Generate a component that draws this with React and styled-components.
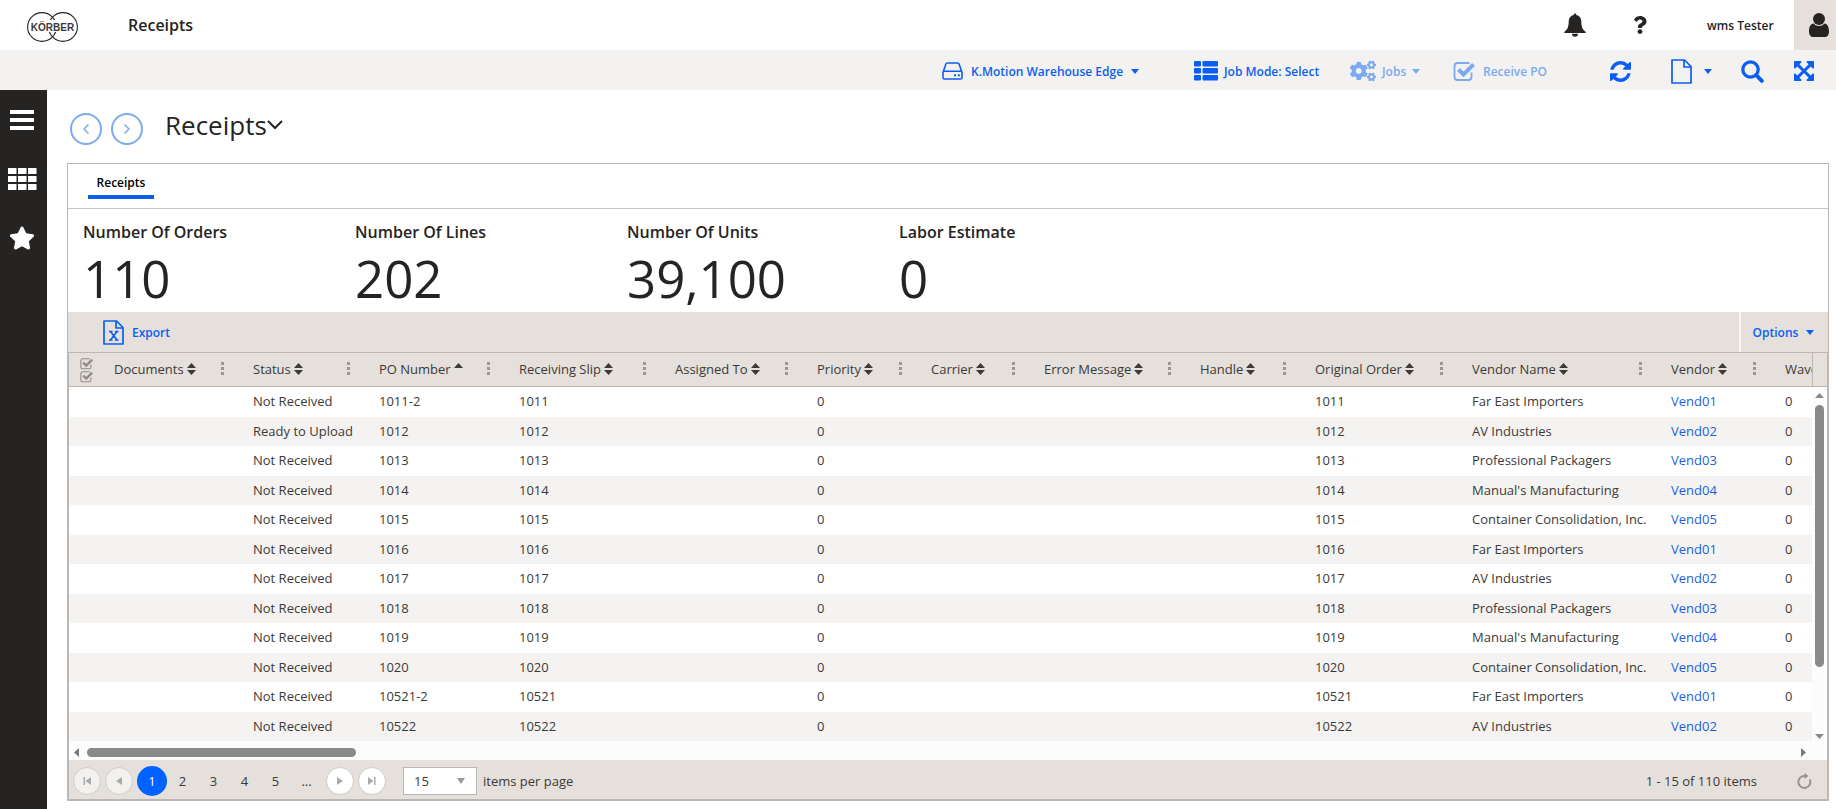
import React, { useState } from 'react';
import styled, { createGlobalStyle } from 'styled-components';
import { FaStar, FaQuestion, FaCogs } from 'react-icons/fa';

const GlobalStyle = createGlobalStyle`
  * {
    box-sizing: border-box;
  }

  body {
    margin: 0;
    background: #fff;
    color: #252423;
    font-family: 'Open Sans', 'Noto Sans', sans-serif;
    font-size: 13px;
  }

  button,
  select {
    font: inherit;
    color: inherit;
  }

  button {
    display: inline-flex;
    align-items: center;
    padding: 0;
    border: 0;
    background: none;
    cursor: pointer;
  }

  svg {
    display: block;
    flex: none;
  }
`;

const Page = styled.div`
  display: flex;
  flex-direction: column;
  min-height: 100vh;
`;

const TopBar = styled.header`
  display: flex;
  align-items: center;
  height: 50px;
  padding-left: 26px;
`;

const AppName = styled.h1`
  flex: 1;
  margin: 0 0 0 49px;
  font-size: 16px;
  font-weight: 600;
`;

const UserTools = styled.div`
  display: flex;
  align-items: center;
  align-self: stretch;
`;

const HelpButton = styled.button`
  margin: 0 58px 0 45px;
`;

const UserName = styled.span`
  width: 87px;
  font-size: 12px;
  font-weight: 600;
  white-space: nowrap;
`;

const Avatar = styled.button`
  align-self: stretch;
  width: 42px;
  padding-left: 15px !important;
  background: #e5e0db !important;
`;

const ActionBar = styled.div`
  display: grid;
  grid-template-columns: 252px 156px 103px 157px 61px 70px 53px 20px;
  justify-content: end;
  align-items: center;
  height: 40px;
  padding: 2px 22px 0 0;
  background: #f3f2f0;
`;

const Action = styled.button`
  gap: ${(props) => props.$gap || 8}px;
  color: #0a5ff2;
  font-size: 12px;
  font-weight: 600;
  white-space: nowrap;

  &:disabled {
    color: #7baaf0;
    cursor: default;
  }
`;

const Body = styled.div`
  display: flex;
  flex: 1;
`;

const Sidebar = styled.nav`
  display: flex;
  flex-direction: column;
  align-items: center;
  gap: 35px;
  width: 47px;
  padding: 18px 3px 0 0;
  background: #252423;
`;

const SideButton = styled.button`
  justify-content: center;
  width: 30px;
  height: 24px;
  color: #fff;
`;

const Main = styled.main`
  flex: 1;
  min-width: 0;
  padding: 0 7px 8px 20px;
`;

const TitleRow = styled.div`
  display: flex;
  align-items: center;
  height: 73px;
  padding: 4px 0 0 3px;
`;

const RoundButton = styled.button`
  justify-content: center;
  width: 32px;
  height: 32px;
  margin-right: 9px;
  border: 2px solid #7baaf0 !important;
  border-radius: 50%;
  color: #7baaf0;
`;

const PageTitle = styled.button`
  gap: 0;
  margin: -8px 0 0 13px;
  font-size: 26px !important;
`;

const Panel = styled.section`
  border: 1px solid #bbb8b4;
`;

const Tabs = styled.div`
  height: 45px;
  padding-left: 20px;
  border-bottom: 1px solid #c8c6c3;
`;

const Tab = styled.button`
  justify-content: center;
  width: 66px;
  height: 35px;
  padding-top: 6px !important;
  border-bottom: 4px solid #0a5fe8 !important;
  font-size: 12px !important;
  font-weight: 600 !important;
  color: #000;
`;

const Stats = styled.dl`
  display: flex;
  height: 103px;
  margin: 0;
  padding: 11px 15px 0;
`;

const Stat = styled.div`
  width: 272px;
`;

const StatLabel = styled.dt`
  font-size: 16px;
  font-weight: 600;
  line-height: 24px;
`;

const StatValue = styled.dd`
  margin: 0;
  font-size: 51px;
  line-height: 68px;
`;

const GridTools = styled.div`
  display: flex;
  justify-content: space-between;
  height: 40px;
  padding-left: 35px;
  background: #e5e0db;
`;

const OptionsButton = styled(Action)`
  justify-content: center;
  width: 89px;
  padding-right: 2px !important;
  border-left: 2px solid #f7f6f4 !important;
`;

const Grid = styled.div`
  border: 1px solid #bbb8b4;
`;

const GridBody = styled.div`
  display: flex;
`;

const Viewport = styled.div`
  flex: 1;
  min-width: 0;
  overflow: hidden;
`;

const Table = styled.table`
  width: 1856px;
  table-layout: fixed;
  border-collapse: separate;
  border-spacing: 0;
  color: #3b3a38;
`;

const HeadCell = styled.th`
  height: 34px;
  padding: 0 19px 2px 10px;
  border-bottom: 1px solid #bbb8b4;
  background: #e5e0db;
  font-weight: 400;
  text-align: left;
  white-space: nowrap;
`;

const HeadContent = styled.div`
  display: flex;
  align-items: center;
  justify-content: space-between;
`;

const SortButton = styled.button`
  gap: 3px;
`;

const BulkCell = styled(HeadCell)`
  padding: 0 0 0 11px;
`;

const BulkButtons = styled.div`
  display: flex;
  flex-direction: column;
`;

const Row = styled.tr`
  height: 30px;

  &:nth-child(even) {
    height: 29px;
    background: #f4f3f1;
  }
`;

const Cell = styled.td`
  padding: 0 0 2px 10px;
  line-height: 20px;
  white-space: nowrap;
`;

const VendorLink = styled.a`
  color: #1a5fe0;
  text-decoration: none;
`;

const ScrollColumn = styled.div`
  display: flex;
  flex-direction: column;
  width: 15px;
  color: #8a8a8a;
`;

const ScrollHead = styled.div`
  height: 34px;
  border-bottom: 1px solid #bbb8b4;
  border-left: 1px solid #bbb8b4;
  background: #e5e0db;
`;

const ScrollTrack = styled.div`
  display: flex;
  flex: 1;
  flex-direction: column;
  align-items: center;
  justify-content: space-between;
  padding: 6px 0 2px;
  background: #fcfcfc;
`;

const VerticalThumb = styled.div`
  flex: 1;
  width: 9px;
  margin: 7px 0 67px;
  border-radius: 5px;
  background: #8a8a8a;
`;

const BottomScroll = styled.div`
  display: flex;
  align-items: center;
  height: 19px;
  padding: 4px 21px 0 5px;
  background: #fcfcfc;
  color: #7a7a7a;
`;

const HorizontalThumb = styled.div`
  width: 269px;
  height: 9px;
  margin: 0 auto 0 8px;
  border-radius: 5px;
  background: #8a8a8a;
`;

const Pager = styled.footer`
  display: flex;
  align-items: center;
  height: 39px;
  padding: 2px 15px 0 2px;
  background: #e5e0db;
  color: #3b3a38;
`;

const PagerArrow = styled.button`
  justify-content: center;
  width: 28px;
  height: 28px;
  margin: 0 2px;
  border: 1px solid #cfccc8 !important;
  border-radius: 50%;
  background: #fff !important;
  color: #aaa;

  &:disabled {
    background: #f2f1ef !important;
    cursor: default;
  }
`;

const PageNumbers = styled.div`
  display: flex;
  margin: 0 2px;
`;

const PageButton = styled.button`
  justify-content: center;
  width: ${(props) => (props.$active ? 30 : 31)}px;
  height: 30px;
  border-radius: 15px;
  background: ${(props) => (props.$active ? '#0063ff' : 'none')} !important;
  color: ${(props) => (props.$active ? '#fff' : 'inherit')} !important;
`;

const PageSize = styled.label`
  display: flex;
  align-items: center;
  gap: 6px;
  margin-left: 15px;
`;

const SelectBox = styled.span`
  display: grid;
  align-items: center;
  width: 74px;
  height: 28px;
  color: #999;

  > * {
    grid-area: 1 / 1;
  }

  svg {
    justify-self: end;
    margin-right: 12px;
    pointer-events: none;
  }
`;

const Select = styled.select`
  width: 100%;
  height: 100%;
  padding: 0 10px;
  appearance: none;
  border: 1px solid #bbb8b4;
  border-radius: 0;
  background: #fff;
  color: #3b3a38;
`;

const Summary = styled.span`
  margin-left: auto;
  margin-right: 40px;
`;

const PATHS = {
  refresh:
    'M1511 928q0 5-1 7-64 268-268 434.5t-478 166.5q-146 0-282.5-55t-243.5-157l-129 129q-19 19-45 19t-45-19-19-45v-448q0-26 19-45t45-19h448q26 0 45 19t19 45-19 45l-137 137q71 66 161 102t187 36q134 0 250-65t186-179q11-17 53-117 8-23 30-23h192q13 0 22.5 9.5t9.5 22.5zm25-800v448q0 26-19 45t-45 19h-448q-26 0-45-19t-19-45 19-45l138-138q-148-137-349-137-134 0-250 65t-186 179q-11 17-53 117-8 23-30 23h-199q-13 0-22.5-9.5t-9.5-22.5v-7q65-268 270-434.5t480-166.5q146 0 284 55.5t245 156.5l130-129q19-19 45-19t45 19 19 45z',
  expand:
    'M1283 413l-355 355 355 355 144-144q29-31 70-14 39 17 39 59v448q0 26-19 45t-45 19h-448q-42 0-59-40-17-39 14-69l144-144-355-355-355 355 144 144q31 30 14 69-17 40-59 40h-448q-26 0-45-19t-19-45v-448q0-42 40-59 39-17 69 14l144 144 355-355-355-355-144 144q-19 19-45 19-12 0-24-5-40-17-40-59v-448q0-26 19-45t45-19h448q42 0 59 40 17 39-14 69l-144 144 355 355 355-355-144-144q-31-30-14-69 17-40 59-40h448q26 0 45 19t19 45v448q0 42-39 59-13 5-25 5-26 0-45-19z',
};

const Glyph = ({ name, size }) => (
  <svg width={size} height={size} viewBox="0 0 1536 1536" fill="currentColor">
    <path d={PATHS[name]} />
  </svg>
);

const Logo = () => (
  <svg width="53" height="34" viewBox="0 0 53 34" role="img" aria-label="Körber">
    <g fill="none" stroke="#252423" strokeWidth="1.100">
      <circle cx="16" cy="19" r="14.400" />
      <circle cx="37" cy="19" r="14.400" />
    </g>
    <rect x="10" y="12" width="33" height="12" fill="#fff" />
    <text
      x="26.5"
      y="22.5"
      textAnchor="middle"
      fontFamily="Liberation Sans, sans-serif"
      fontSize="10"
      fontWeight="700"
      fill="#3b3a38"
    >
      KÖRBER
    </text>
  </svg>
);

const Bell = () => (
  <svg width="22" height="24" viewBox="0 0 22 24" fill="currentColor">
    <path d="M11 .5c.8 0 1.3.6 1.3 1.5 3.2.6 5 3.2 5 6.6 0 6 1.600 8.200 4.400 10.400v1H.3v-1C3.100 16.800 4.700 14.600 4.700 8.600c0-3.400 1.800-6 5-6.600 0-.9.500-1.500 1.300-1.500zM8 20.800h6a3 3 0 0 1-6 0z" />
  </svg>
);

const Person = () => (
  <svg width="20" height="24" viewBox="0 0 20 24" fill="currentColor">
    <circle cx="10" cy="6" r="6" />
    <path d="M4.500 10.500a7.200 7.200 0 0 0 11 0C18.500 11 20 14 20 18.500 20 22 18.500 24 16 24H4c-2.500 0-4-2-4-5.500C0 14 1.500 11 4.500 10.500z" />
  </svg>
);

const Drive = () => (
  <svg width="21" height="18" viewBox="0 0 21 18" fill="none" stroke="currentColor" strokeWidth="1.600">
    <path d="M1 10.500 3.800 2.200Q4.200 1 5.500 1h10q1.300 0 1.700 1.200L20 10.500M1 10v5.500Q1 17 2.500 17h16q1.500 0 1.500-1.500V10.200q0-1-1.500-1h-16Q1 9.200 1 10.200z" />
    <path d="M12 13.200h2M15.800 13.200h2" strokeWidth="2" />
  </svg>
);

const ListBlocks = () => (
  <svg width="24" height="20" viewBox="0 0 24 20" fill="currentColor">
    {[0, 7, 14].map((y) => (
      <React.Fragment key={y}>
        <rect x="0" y={y} width="7" height="5.500" rx="1" />
        <rect x="8.500" y={y} width="15.500" height="5.500" rx="1" />
      </React.Fragment>
    ))}
  </svg>
);

const CheckBox = ({ size = 22, color = 'currentColor' }) => (
  <svg width={size} height={size} viewBox="0 0 22 22" fill="none" stroke={color}>
    <path d="M18.500 12.500v4.500q0 3-3 3h-11q-3 0-3-3V6q0-3 3-3h12" strokeWidth="1.800" />
    <path d="m5.500 9.500 5 5L20.500 4.500" strokeWidth="4" />
  </svg>
);

const PageIcon = ({ sheet }) => (
  <svg width="21" height="25" viewBox="0 0 21 25" fill="none" stroke="currentColor" strokeWidth="1.700">
    <path d="M1 1h12.500L20 7.500V24H1zM13 1v7h7" strokeLinejoin="round" />
    {sheet && <path d="M6 11.500h3.500M12 11.500h3.500M6 20h3.500M12 20h3.500M7.500 11.500l6.500 8.500M14 11.500 7.500 20" strokeWidth="1.500" />}
  </svg>
);

const SearchIcon = () => (
  <svg width="23" height="23" viewBox="0 0 23 23" fill="none" stroke="currentColor">
    <circle cx="9.500" cy="9.500" r="7.700" strokeWidth="3.300" />
    <path d="m15.200 15.200 5.600 5.600" strokeWidth="4" strokeLinecap="round" />
  </svg>
);

const Triangle = ({ dir = 'down', w = 8, h = 5 }) => {
  const points = {
    down: `0,0 ${w},0 ${w / 2},${h}`,
    up: `0,${h} ${w},${h} ${w / 2},0`,
    left: `${w},0 ${w},${h} 0,${h / 2}`,
    right: `0,0 0,${h} ${w},${h / 2}`,
  };
  return (
    <svg width={w} height={h} fill="currentColor">
      <polygon points={points[dir]} />
    </svg>
  );
};

const SortIcon = ({ asc }) => (
  <svg width="9" height="12" viewBox="0 0 9 12" fill="currentColor">
    {asc ? <path d="M0 5h9L4.500 0z" /> : <path d="M0 5h9L4.500 0zM0 7h9l-4.500 5z" />}
  </svg>
);

const MenuDots = () => (
  <svg width="3" height="13" viewBox="0 0 3 13" fill="#9b9792">
    <rect width="3" height="3" />
    <rect y="5" width="3" height="3" />
    <rect y="10" width="3" height="3" />
  </svg>
);

const Chevron = ({ d, w, h, stroke = 1.5 }) => (
  <svg width={w} height={h} viewBox={`0 0 ${w} ${h}`} fill="none" stroke="currentColor" strokeWidth={stroke}>
    <path d={d} />
  </svg>
);

const EdgeArrow = ({ last }) => (
  <svg width="8" height="8" viewBox="0 0 8 8" fill="currentColor">
    <path d={last ? 'M0 0v8l5.500-4zM6 0h1.500v8H6z' : 'M8 0v8L2.500 4zM.5 0H2v8H.5z'} />
  </svg>
);

const ReloadIcon = () => (
  <svg width="15" height="16" viewBox="0 0 15 16" fill="none" stroke="#96938f" strokeWidth="2">
    <path d="M12.800 6.500A6 6 0 1 1 8 3" />
    <path d="M7.500 0v6l4-3z" fill="#96938f" stroke="none" />
  </svg>
);

const columns = [
  { key: 'documents', title: 'Documents', width: 139 },
  { key: 'status', title: 'Status', width: 126 },
  { key: 'po', title: 'PO Number', width: 140, asc: true },
  { key: 'slip', title: 'Receiving Slip', width: 156 },
  { key: 'assigned', title: 'Assigned To', width: 142 },
  { key: 'priority', title: 'Priority', width: 114 },
  { key: 'carrier', title: 'Carrier', width: 113 },
  { key: 'error', title: 'Error Message', width: 156 },
  { key: 'handle', title: 'Handle', width: 115 },
  { key: 'order', title: 'Original Order', width: 157 },
  { key: 'vendorName', title: 'Vendor Name', width: 199 },
  { key: 'vendor', title: 'Vendor', width: 114 },
  { key: 'wave', title: 'Wave', width: 150 },
];

const vendors = [
  'Far East Importers',
  'AV Industries',
  'Professional Packagers',
  "Manual's Manufacturing",
  'Container Consolidation, Inc.',
];

const poNumbers = [
  '1011-2', '1012', '1013', '1014', '1015', '1016',
  '1017', '1018', '1019', '1020', '10521-2', '10522',
];

const rows = poNumbers.map((po, i) => {
  const order = po.split('-')[0];
  return {
    po,
    order,
    slip: order,
    status: i === 1 ? 'Ready to Upload' : 'Not Received',
    priority: 0,
    vendorName: vendors[i % 5],
    vendor: `Vend0${(i % 5) + 1}`,
    wave: 0,
  };
});

const stats = [
  ['Number Of Orders', '110'],
  ['Number Of Lines', '202'],
  ['Number Of Units', '39,100'],
  ['Labor Estimate', '0'],
];

function App() {
  const [page, setPage] = useState(1);
  const [pageSize, setPageSize] = useState('15');

  return (
    <Page>
      <GlobalStyle />
      <TopBar>
        <Logo />
        <AppName>Receipts</AppName>
        <UserTools>
          <button aria-label="Notifications"><Bell /></button>
          <HelpButton aria-label="Help"><FaQuestion size={18} /></HelpButton>
          <UserName>wms Tester</UserName>
          <Avatar aria-label="Account"><Person /></Avatar>
        </UserTools>
      </TopBar>

      <ActionBar>
        <Action><Drive />K.Motion Warehouse Edge<Triangle /></Action>
        <Action $gap={6}><ListBlocks />Job Mode: Select</Action>
        <Action $gap={6} disabled><FaCogs size={26} />Jobs<Triangle /></Action>
        <Action disabled><CheckBox />Receive PO</Action>
        <Action aria-label="Refresh"><Glyph name="refresh" size={21} /></Action>
        <Action $gap={12} aria-label="New"><PageIcon /><Triangle /></Action>
        <Action aria-label="Search"><SearchIcon /></Action>
        <Action aria-label="Full screen"><Glyph name="expand" size={20} /></Action>
      </ActionBar>

      <Body>
        <Sidebar>
          <SideButton aria-label="Menu">
            <Chevron w={24} h={20} stroke={4} d="M0 2h24M0 10h24M0 18h24" />
          </SideButton>
          <SideButton aria-label="Apps">
            <svg width="29" height="22" viewBox="0 0 29 22" fill="currentColor">
              {[0, 8, 16].map((y) =>
                [0, 10, 20].map((x) => <rect key={`${x}-${y}`} x={x} y={y} width="8.500" height="6" />)
              )}
            </svg>
          </SideButton>
          <SideButton aria-label="Favorites"><FaStar size={26} /></SideButton>
        </Sidebar>

        <Main>
          <TitleRow>
            <RoundButton aria-label="Back"><Chevron w={6} h={10} d="M5.500.5 1 5l4.500 4.500" /></RoundButton>
            <RoundButton aria-label="Forward"><Chevron w={6} h={10} d="M.5.5 5 5 .5 9.500" /></RoundButton>
            <PageTitle>
              Receipts
              <Chevron w={16} h={10} stroke={2} d="M1 1l7 7 7-7" />
            </PageTitle>
          </TitleRow>

          <Panel>
            <Tabs><Tab>Receipts</Tab></Tabs>
            <Stats>
              {stats.map(([label, value]) => (
                <Stat key={label}>
                  <StatLabel>{label}</StatLabel>
                  <StatValue>{value}</StatValue>
                </Stat>
              ))}
            </Stats>
            <GridTools>
              <Action><PageIcon sheet />Export</Action>
              <OptionsButton>Options<Triangle /></OptionsButton>
            </GridTools>

            <Grid>
              <GridBody>
                <Viewport>
                  <Table>
                    <colgroup>
                      <col width="35" />
                      {columns.map((col) => <col key={col.key} width={col.width} />)}
                    </colgroup>
                    <thead>
                      <tr>
                        <BulkCell scope="col">
                          <BulkButtons>
                            <button aria-label="Select all"><CheckBox size={13} color="#8f8b86" /></button>
                            <button aria-label="Clear all"><CheckBox size={13} color="#8f8b86" /></button>
                          </BulkButtons>
                        </BulkCell>
                        {columns.map((col) => (
                          <HeadCell key={col.key} scope="col">
                            <HeadContent>
                              <SortButton>{col.title}<SortIcon asc={col.asc} /></SortButton>
                              <button aria-label={`${col.title} menu`}><MenuDots /></button>
                            </HeadContent>
                          </HeadCell>
                        ))}
                      </tr>
                    </thead>
                    <tbody>
                      {rows.map((row) => (
                        <Row key={row.po}>
                          <Cell />
                          {columns.map(({ key }) => (
                            <Cell key={key}>
                              {key === 'vendor' ? <VendorLink href="#vendor">{row.vendor}</VendorLink> : row[key]}
                            </Cell>
                          ))}
                        </Row>
                      ))}
                    </tbody>
                  </Table>
                </Viewport>
                <ScrollColumn>
                  <ScrollHead />
                  <ScrollTrack>
                    <Triangle dir="up" w={9} h={5} />
                    <VerticalThumb />
                    <Triangle w={9} h={5} />
                  </ScrollTrack>
                </ScrollColumn>
              </GridBody>
              <BottomScroll>
                <Triangle dir="left" w={5} h={9} />
                <HorizontalThumb />
                <Triangle dir="right" w={5} h={9} />
              </BottomScroll>

              <Pager>
                <PagerArrow aria-label="First page" disabled={page === 1}><EdgeArrow /></PagerArrow>
                <PagerArrow aria-label="Previous page" disabled={page === 1}>
                  <Triangle dir="left" w={6} h={8} />
                </PagerArrow>
                <PageNumbers>
                  {[1, 2, 3, 4, 5].map((n) => (
                    <PageButton key={n} $active={n === page} onClick={() => setPage(n)}>{n}</PageButton>
                  ))}
                  <PageButton>...</PageButton>
                </PageNumbers>
                <PagerArrow aria-label="Next page"><Triangle dir="right" w={6} h={8} /></PagerArrow>
                <PagerArrow aria-label="Last page"><EdgeArrow last /></PagerArrow>
                <PageSize>
                  <SelectBox>
                    <Select value={pageSize} onChange={(e) => setPageSize(e.target.value)}>
                      <option>15</option>
                      <option>30</option>
                      <option>50</option>
                    </Select>
                    <Triangle w={8} h={6} />
                  </SelectBox>
                  items per page
                </PageSize>
                <Summary>1 - 15 of 110 items</Summary>
                <button aria-label="Reload"><ReloadIcon /></button>
              </Pager>
            </Grid>
          </Panel>
        </Main>
      </Body>
    </Page>
  );
}

export default App;
